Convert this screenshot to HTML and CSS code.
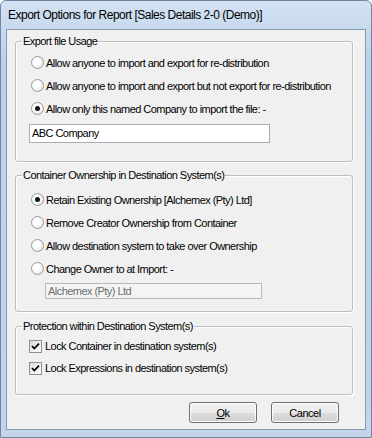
FILE: index.html
```html
<!DOCTYPE html>
<html>
<head>
	<title>Export Options for Report</title>
	<meta name="viewport" content="width=device-width, initial-scale=1">
	<link rel="stylesheet" href="styles.css">
</head>
<body>
	<div class="window">
	<div class="titlebar">Export Options for Report [Sales Details 2-0 (Demo)]</div>
	<div class="panel">

		<fieldset class="group group-usage">
			<legend class="group-title">Export file Usage</legend>
			<div class="row"><span class="radio"></span><span class="label">Allow anyone to import and export for re-distribution</span></div>
			<div class="row"><span class="radio"></span><span class="label">Allow anyone to import and export but not export for re-distribution</span></div>
			<div class="row"><span class="radio on"></span><span class="label">Allow only this named Company to import the file: -</span></div>
			<div class="textbox textbox-company">ABC Company</div>
		</fieldset>

		<fieldset class="group group-owner">
			<legend class="group-title">Container Ownership in Destination System(s)</legend>
			<div class="row"><span class="radio on"></span><span class="label">Retain Existing Ownership [Alchemex (Pty) Ltd]</span></div>
			<div class="row"><span class="radio"></span><span class="label">Remove Creator Ownership from Container</span></div>
			<div class="row"><span class="radio"></span><span class="label">Allow destination system to take over Ownership</span></div>
			<div class="row"><span class="radio"></span><span class="label">Change Owner to at Import: -</span></div>
			<div class="textbox textbox-owner">Alchemex (Pty) Ltd</div>
		</fieldset>

		<fieldset class="group group-protect">
			<legend class="group-title">Protection within Destination System(s)</legend>
			<div class="row row-check"><span class="check"><svg width="11" height="11" viewBox="0 0 11 11"><path d="M2 5 L4.3 7.6 L9 2.6" fill="none" stroke="#000" stroke-width="1.7"/></svg></span><span class="label">Lock Container in destination system(s)</span></div>
			<div class="row row-check"><span class="check"><svg width="11" height="11" viewBox="0 0 11 11"><path d="M2 5 L4.3 7.6 L9 2.6" fill="none" stroke="#000" stroke-width="1.7"/></svg></span><span class="label">Lock Expressions in destination system(s)</span></div>
		</fieldset>

		<div class="buttons">
			<button class="btn"><u>O</u>k</button>
			<button class="btn">Cancel</button>
		</div>
	</div>
	</div>
</body>
</html>
```

FILE: styles.css
```css
body {
  margin: 0;
  background: #ffffff;
}

.window {
  width: 372px;
  height: 438px;
  box-sizing: border-box;
  border: 1px solid #6f87a3; /* dark outer frame */
  border-radius: 6px 6px 0 0;
  background: linear-gradient(#d3e2f3, #bcd1e9 60px, #c2d5eb);
  display: flex;
  flex-direction: column;
}

.titlebar {
  height: 28px;
  padding-left: 7px;
  display: flex;
  align-items: center;
  font-family: "Liberation Sans", Arial, sans-serif;
  font-size: 12px;
  letter-spacing: -0.5px;
  color: #000000;
}

.panel {
  flex: 1;
  margin: 0 5px 7px 5px;
  border: 1px solid #8699b0;
  background: #f0f0f0;
  padding: 5px 12px 0 8px;
  font-family: "Liberation Sans", Arial, sans-serif;
  font-size: 11px;
  letter-spacing: -0.55px;
  color: #000000;
}

/* group boxes */
.group {
  margin: 0;
  padding: 0 0 0 6px;
  border: 1px solid #bdbdbd;
  border-radius: 3px;
  box-shadow: inset 1px 1px 0 #ffffff, 1px 1px 0 #ffffff;
}

.group-title {
  padding: 0 1px;
  line-height: 13px;
}

.group-usage {
  padding-top: 3px;
  padding-bottom: 18px;
  margin-bottom: 7px;
}

.group-owner {
  padding-top: 6px;
  padding-bottom: 12px;
  margin-bottom: 8px;
}

.group-protect {
  padding-top: 2px;
  padding-bottom: 15px;
}

.row {
  height: 23px;
  display: flex;
  align-items: center;
  padding-left: 9px;
}

.row-check {
  height: 22px;
  padding-left: 7px;
}

.label {
  margin-left: 2px;
  white-space: nowrap;
}

.row-check .label {
  margin-left: 3px;
}

/* radio buttons */
.radio {
  width: 13px;
  height: 13px;
  box-sizing: border-box;
  border: 1px solid #9a9a9a;
  border-radius: 50%;
  background: radial-gradient(circle at 40% 40%, #ffffff 30%, #dedede);
  display: flex;
  align-items: center;
  justify-content: center;
  flex-shrink: 0;
}

.radio.on::after {
  content: "";
  width: 5px;
  height: 5px;
  border-radius: 50%;
  background: #151515;
}

/* check boxes */
.check {
  width: 13px;
  height: 13px;
  box-sizing: border-box;
  border: 1px solid #8e8f8f;
  background: linear-gradient(135deg, #dcdcdc, #ffffff);
  display: flex;
  align-items: center;
  justify-content: center;
  flex-shrink: 0;
}

/* text boxes */
.textbox {
  box-sizing: border-box;
  border: 1px solid #abadb3;
  background: #ffffff;
  white-space: nowrap;
  padding-left: 2px;
}

.textbox-company {
  margin: 4px 0 0 7px;
  width: 241px;
  height: 19px;
  line-height: 17px;
}

.textbox-owner {
  margin: 3px 0 0 23px;
  width: 217px;
  height: 16px;
  line-height: 14px;
  background: #f4f4f4;
  border-color: #b5b9bd;
  color: #6d6d6d;
}

/* dialog buttons */
.buttons {
  display: flex;
  justify-content: flex-end;
  gap: 14px;
  margin-top: 7px;
  padding-right: 14px;
}

.btn {
  width: 68px;
  height: 21px;
  padding: 0;
  border: 1px solid #707070;
  border-radius: 3px;
  background: linear-gradient(#f2f2f2, #ebebeb 50%, #dddddd 51%, #cfcfcf);
  box-shadow: inset 0 0 0 1px #fcfcfc;
  font-family: "Liberation Sans", Arial, sans-serif;
  font-size: 11px;
  letter-spacing: -0.45px;
  color: #000000;
}
```
